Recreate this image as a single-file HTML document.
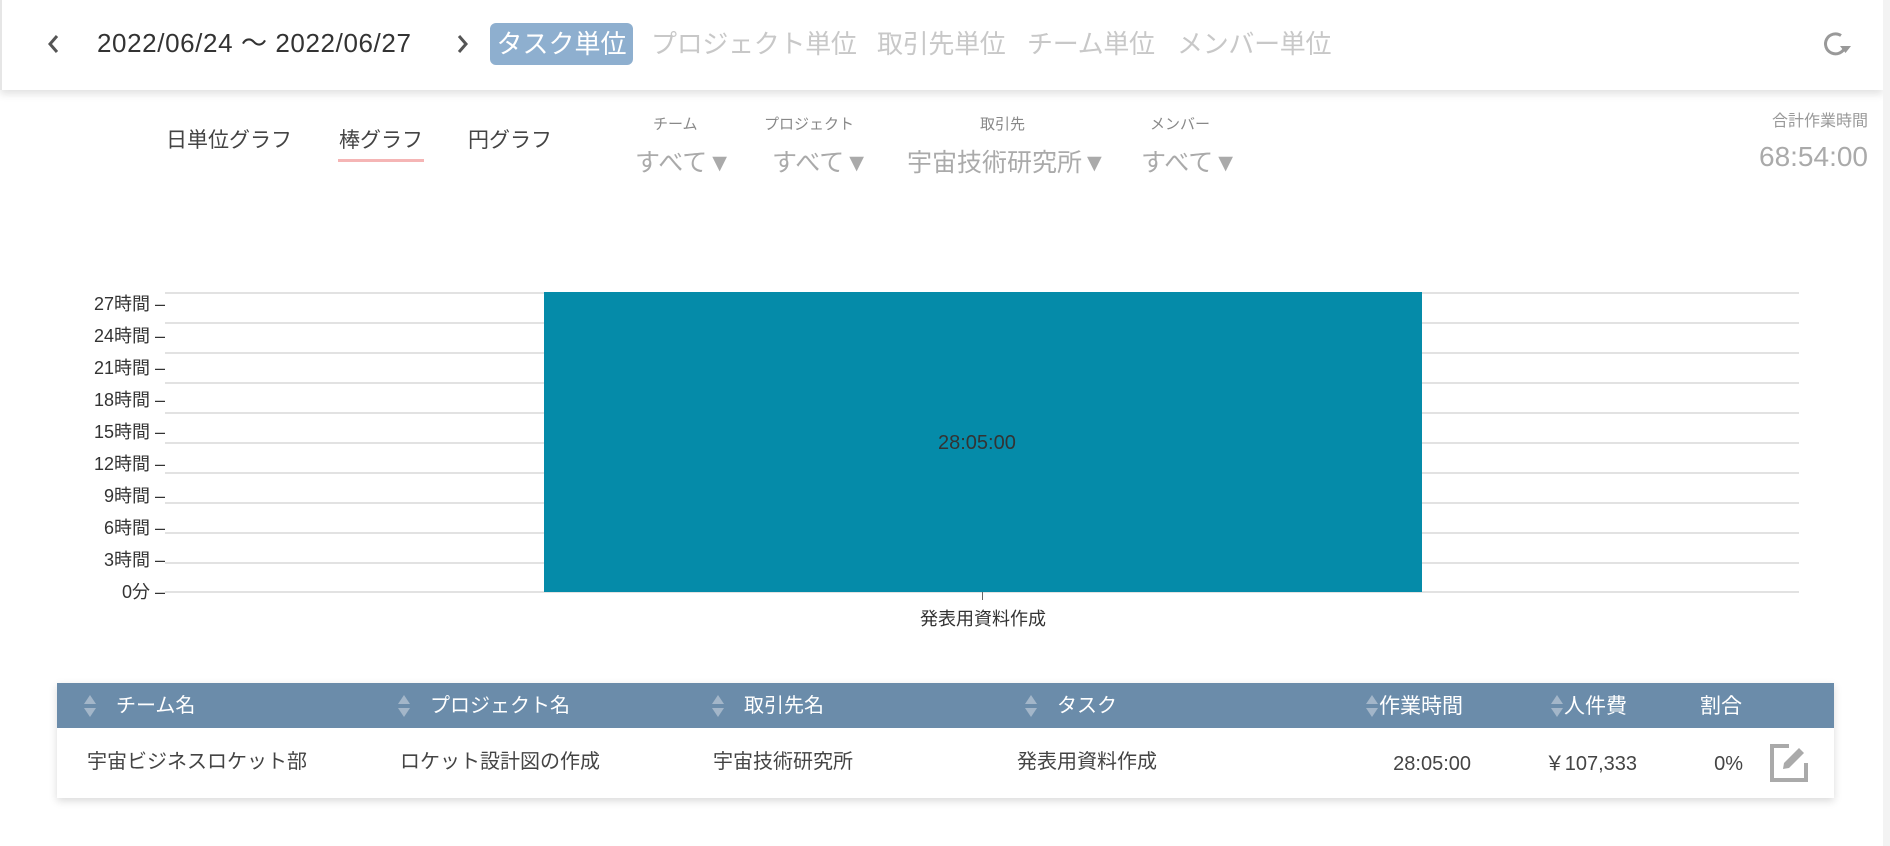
<!DOCTYPE html>
<html><head><meta charset="utf-8"><style>
*{margin:0;padding:0;box-sizing:border-box}
body{width:1890px;height:846px;background:#fff;font-family:"Liberation Sans","Noto Sans CJK JP",sans-serif;position:relative;overflow:hidden}
.a{position:absolute;white-space:nowrap;line-height:1.2}
.hdr{position:absolute;left:0;top:0;width:1883px;height:90px;background:#fff;box-shadow:0 4px 8px rgba(0,0,0,.12);border-left:2px solid #e6e6e6}
.tab{font-size:26px;color:#c8c8c8;top:29px;letter-spacing:-0.3px}
.flab{font-size:15px;color:#888;top:116px}
.fval{font-size:25px;color:#aaa;top:148px}
.gl{position:absolute;left:165px;width:1634px;height:2px;background:#e2e2e2}
.yl{position:absolute;right:1725px;font-size:18px;color:#333;line-height:20px}
.th{font-size:20px;color:#fff;top:694px}
.td{font-size:20px;color:#444;top:750px;line-height:24px}
.sort{position:absolute;top:694px;width:14px;height:24px}
</style></head><body>
<div class="hdr"></div>
<div style="position:absolute;right:0;top:0;width:7px;height:846px;background:#f3f3f3"></div>
<svg class="a" style="left:46px;top:33px" width="16" height="22"><path d="M11 3 L4 11 L11 19" stroke="#555" stroke-width="3" fill="none"/></svg>
<div class="a" style="left:97px;top:28px;font-size:26px;color:#333;letter-spacing:0.6px">2022/06/24 〜 2022/06/27</div>
<svg class="a" style="left:454px;top:33px" width="16" height="22"><path d="M5 3 L12 11 L5 19" stroke="#555" stroke-width="3" fill="none"/></svg>
<div class="a" style="left:490px;top:23px;width:143px;height:42px;background:#8eafcf;border-radius:6px;color:#fff;font-size:26px;text-align:center;line-height:42px">タスク単位</div>
<div class="a tab" style="left:651px">プロジェクト単位</div>
<div class="a tab" style="left:877px">取引先単位</div>
<div class="a tab" style="left:1027px">チーム単位</div>
<div class="a tab" style="left:1177px">メンバー単位</div>
<svg class="a" style="left:1819px;top:27px" width="34" height="34" viewBox="0 0 34 34"><path d="M26 20 A10 10 0 1 1 22 8.5" stroke="#999" stroke-width="3" fill="none"/><path d="M21 19 L32 19 L26.5 26 Z" fill="#999"/></svg>

<div class="a" style="left:166px;top:128px;font-size:21px;color:#444">日単位グラフ</div>
<div class="a" style="left:339px;top:128px;font-size:21px;color:#444">棒グラフ</div>
<div class="a" style="left:338px;top:159px;width:86px;height:3px;background:#f5b5b5"></div>
<div class="a" style="left:468px;top:128px;font-size:21px;color:#444">円グラフ</div>
<div class="a flab" style="left:653px">チーム</div>
<div class="a flab" style="left:764px">プロジェクト</div>
<div class="a flab" style="left:980px">取引先</div>
<div class="a flab" style="left:1150px">メンバー</div>
<div class="a fval" style="left:635px">すべて▼</div>
<div class="a fval" style="left:772px">すべて▼</div>
<div class="a fval" style="left:907px">宇宙技術研究所▼</div>
<div class="a fval" style="left:1141px">すべて▼</div>
<div class="a" style="right:22px;top:112px;font-size:16px;color:#999">合計作業時間</div>
<div class="a" style="right:22px;top:140px;font-size:28px;color:#aaa">68:54:00</div>

<div class="gl" style="top:292px"></div><div class="gl" style="top:322px"></div><div class="gl" style="top:352px"></div><div class="gl" style="top:382px"></div><div class="gl" style="top:412px"></div><div class="gl" style="top:442px"></div><div class="gl" style="top:472px"></div><div class="gl" style="top:502px"></div><div class="gl" style="top:532px"></div><div class="gl" style="top:562px"></div><div class="gl" style="top:591px"></div>
<div class="yl" style="top:294px">27時間 –</div>
<div class="yl" style="top:326px">24時間 –</div>
<div class="yl" style="top:358px">21時間 –</div>
<div class="yl" style="top:390px">18時間 –</div>
<div class="yl" style="top:422px">15時間 –</div>
<div class="yl" style="top:454px">12時間 –</div>
<div class="yl" style="top:486px">9時間 –</div>
<div class="yl" style="top:518px">6時間 –</div>
<div class="yl" style="top:550px">3時間 –</div>
<div class="yl" style="top:582px">0分 –</div>
<div class="a" style="left:544px;top:292px;width:878px;height:300px;background:#058ba9"></div>
<div class="a" style="left:938px;top:431px;font-size:20px;color:#333">28:05:00</div>
<div class="a" style="left:982px;top:592px;width:1px;height:8px;background:#666"></div>
<div class="a" style="left:983px;top:609px;transform:translateX(-50%);font-size:18px;color:#333">発表用資料作成</div>

<div class="a" style="left:57px;top:683px;width:1777px;height:115px;background:#fff;box-shadow:0 3px 8px rgba(0,0,0,.15)"></div>
<div class="a" style="left:57px;top:683px;width:1777px;height:45px;background:#6b8caa"></div>
<svg class="sort" style="left:83px"><path d="M7 1 L13 10 L1 10Z M7 23 L13 14 L1 14Z" fill="#a3b6c9"/></svg>
<svg class="sort" style="left:397px"><path d="M7 1 L13 10 L1 10Z M7 23 L13 14 L1 14Z" fill="#a3b6c9"/></svg>
<svg class="sort" style="left:711px"><path d="M7 1 L13 10 L1 10Z M7 23 L13 14 L1 14Z" fill="#a3b6c9"/></svg>
<svg class="sort" style="left:1024px"><path d="M7 1 L13 10 L1 10Z M7 23 L13 14 L1 14Z" fill="#a3b6c9"/></svg>
<svg class="sort" style="left:1365px"><path d="M7 1 L13 10 L1 10Z M7 23 L13 14 L1 14Z" fill="#a3b6c9"/></svg>
<svg class="sort" style="left:1550px"><path d="M7 1 L13 10 L1 10Z M7 23 L13 14 L1 14Z" fill="#a3b6c9"/></svg>
<div class="a th" style="left:116px">チーム名</div>
<div class="a th" style="left:430px">プロジェクト名</div>
<div class="a th" style="left:744px">取引先名</div>
<div class="a th" style="left:1057px">タスク</div>
<div class="a th" style="left:1379px;font-size:21px">作業時間</div>
<div class="a th" style="left:1564px;font-size:21px">人件費</div>
<div class="a th" style="left:1700px;font-size:21px">割合</div>
<div class="a td" style="left:87px">宇宙ビジネスロケット部</div>
<div class="a td" style="left:400px">ロケット設計図の作成</div>
<div class="a td" style="left:713px">宇宙技術研究所</div>
<div class="a td" style="left:1017px">発表用資料作成</div>
<div class="a td" style="right:419px;top:752px">28:05:00</div>
<div class="a td" style="right:253px;top:752px">￥107,333</div>
<div class="a td" style="right:147px;top:752px">0%</div>
<svg class="a" style="left:1769px;top:743px" width="40" height="40" viewBox="0 0 40 40"><path d="M20 3 H3 V37 H37 V20" stroke="#aaa" stroke-width="4" fill="none"/><path d="M14 26 L15 20 L30 5 L35 10 L20 25 Z" fill="#aaa"/></svg>
</body></html>
